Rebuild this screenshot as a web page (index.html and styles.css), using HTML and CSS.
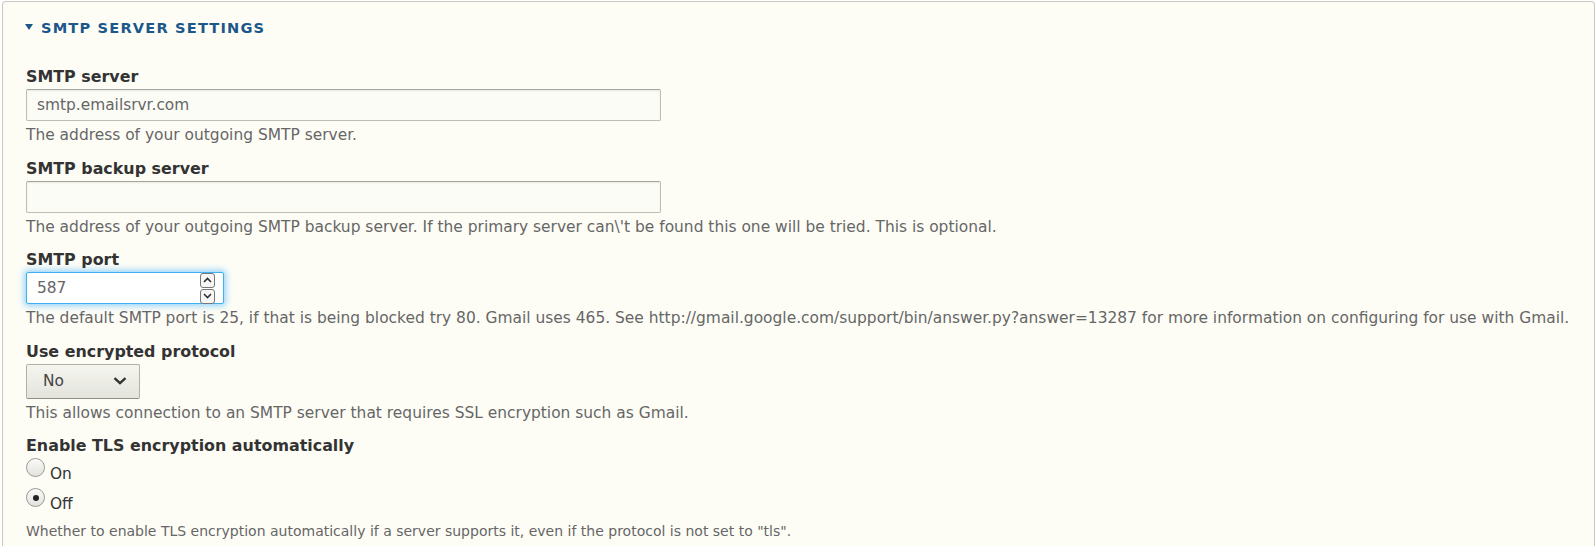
FILE: index.html
```html
<!DOCTYPE html>
<html lang="en">
<head>
  <meta charset="UTF-8" />
  <title>SMTP server settings</title>
  <link rel="stylesheet" href="styles.css">
</head>
<body>
  <div class="panel">
    <div class="panel-title">
      <span class="arrow"></span>
      <span>SMTP server settings</span>
    </div>

    <div class="panel-body">
      <div class="form-item">
        <label for="smtp-host">SMTP server</label>
        <input type="text" id="smtp-host" class="field field-wide" value="smtp.emailsrvr.com" />
        <div class="help">The address of your outgoing SMTP server.</div>
      </div>

      <div class="form-item">
        <label for="smtp-backup">SMTP backup server</label>
        <input type="text" id="smtp-backup" class="field field-wide" value="" />
        <div class="help">The address of your outgoing SMTP backup server. If the primary server can\'t be found this one will be tried. This is optional.</div>
      </div>

      <div class="form-item">
        <label for="smtp-port">SMTP port</label>
        <div class="field field-port">
          <input type="text" id="smtp-port" value="587" />
          <div class="spinner">
            <span class="spin">
              <svg width="9" height="6" viewBox="0 0 9 6"><path d="M1 5 L4.5 1.5 L8 5" fill="none" stroke="#333" stroke-width="1.6"/></svg>
            </span>
            <span class="spin">
              <svg width="9" height="6" viewBox="0 0 9 6"><path d="M1 1 L4.5 4.5 L8 1" fill="none" stroke="#333" stroke-width="1.6"/></svg>
            </span>
          </div>
        </div>
        <div class="help">The default SMTP port is 25, if that is being blocked try 80. Gmail uses 465. See http://gmail.google.com/support/bin/answer.py?answer=13287 for more information on configuring for use with Gmail.</div>
      </div>

      <div class="form-item">
        <label for="smtp-protocol">Use encrypted protocol</label>
        <div class="select">
          <span>No</span>
          <svg width="14" height="8" viewBox="0 0 14 8"><path d="M1.5 1.2 L7 6.2 L12.5 1.2" fill="none" stroke="#333" stroke-width="2.4"/></svg>
        </div>
        <div class="help">This allows connection to an SMTP server that requires SSL encryption such as Gmail.</div>
      </div>

      <div class="form-item">
        <label>Enable TLS encryption automatically</label>
        <div class="radio-row">
          <span class="radio"></span>
          <span class="radio-label">On</span>
        </div>
        <div class="radio-row">
          <span class="radio checked"></span>
          <span class="radio-label">Off</span>
        </div>
        <div class="help help-small">Whether to enable TLS encryption automatically if a server supports it, even if the protocol is not set to "tls".</div>
      </div>
    </div>
  </div>
</body>
</html>
```

FILE: styles.css
```css
body {
  margin: 1px 1px 0 2px;
  font-family: "DejaVu Sans", Verdana, sans-serif;
  background-color: #fff;
  color: #333;
}
.panel {
  background-color: #fdfdf6;
  border: 1px solid #c9c9c1;
  border-bottom: none;
  border-radius: 4px 4px 0 0;
  height: 560px;
  box-sizing: border-box;
}
.panel-title {
  display: flex;
  align-items: center;
  padding: 15px 0 0 22px;
  height: 20px;
  font-size: 14.6px;
  font-weight: bold;
  letter-spacing: 0.08em;
  text-transform: uppercase;
  color: #1b578a;
}
.arrow {
  width: 0;
  height: 0;
  border-left: 4.5px solid transparent;
  border-right: 4.5px solid transparent;
  border-top: 6px solid #1b578a;
  margin-right: 8px;
}
.panel-body {
  padding: 30px 0 0 23px;
}
.form-item {
  margin-bottom: 13.5px;
}
label {
  display: block;
  font-size: 15.9px;
  font-weight: bold;
  line-height: 20px;
  color: #333;
}
.field {
  display: block;
  box-sizing: border-box;
  height: 32px;
  margin-top: 2px;
  border: 1px solid #bdbdb5;
  border-top-color: #a5a59e;
  border-radius: 2px;
  background-color: #fcfcf7;
  box-shadow: inset 0 1px 2px rgba(0, 0, 0, 0.08);
  font-family: inherit;
  font-size: 15.4px;
  color: #666;
  padding: 0 10px;
}
.field-wide {
  width: 635px;
}
.field-port {
  display: flex;
  align-items: center;
  width: 198px;
  padding: 0 8px 0 10px;
  background-color: #fff;
  border-color: #40b0f0;
  box-shadow: 0 0 6px 2px rgba(64, 176, 255, 0.55);
}
.field-port input {
  flex: 1;
  min-width: 0;
  border: none;
  outline: none;
  background: none;
  padding: 0;
  font-family: inherit;
  font-size: 15.4px;
  color: #666;
}
.spinner {
  display: flex;
  flex-direction: column;
  gap: 1px;
}
.spin {
  display: flex;
  align-items: center;
  justify-content: center;
  width: 13px;
  height: 13px;
  border: 1px solid #777;
  border-radius: 3px;
  background: #f6f6f6;
}
.help {
  margin-top: 4px;
  font-size: 15.45px;
  line-height: 20px;
  color: #666;
}
.help-small {
  margin-top: 5px;
  font-size: 14px;
}
.select {
  display: flex;
  align-items: center;
  justify-content: space-between;
  box-sizing: border-box;
  width: 114px;
  height: 35px;
  margin-top: 2px;
  padding: 0 12px 0 16px;
  border: 1px solid #b0b0a8;
  border-bottom-color: #8e8e88;
  border-radius: 2px;
  background: linear-gradient(#f5f5ef, #e4e4dd);
  font-size: 15.4px;
  color: #444;
}
.radio-row {
  display: flex;
  align-items: flex-start;
  height: 30px;
  padding-top: 2px;
  box-sizing: border-box;
}
.radio {
  position: relative;
  width: 19px;
  height: 19px;
  box-sizing: border-box;
  border: 1px solid #9a9a94;
  border-radius: 50%;
  background: linear-gradient(#fafaf8, #e2e2de);
  margin-right: 5px;
}
.radio.checked::after {
  content: "";
  position: absolute;
  left: 5.5px;
  top: 5.5px;
  width: 6px;
  height: 6px;
  border-radius: 50%;
  background: #222;
}
.radio-label {
  font-size: 15.4px;
  padding-top: 7px;
  color: #333;
}
```
